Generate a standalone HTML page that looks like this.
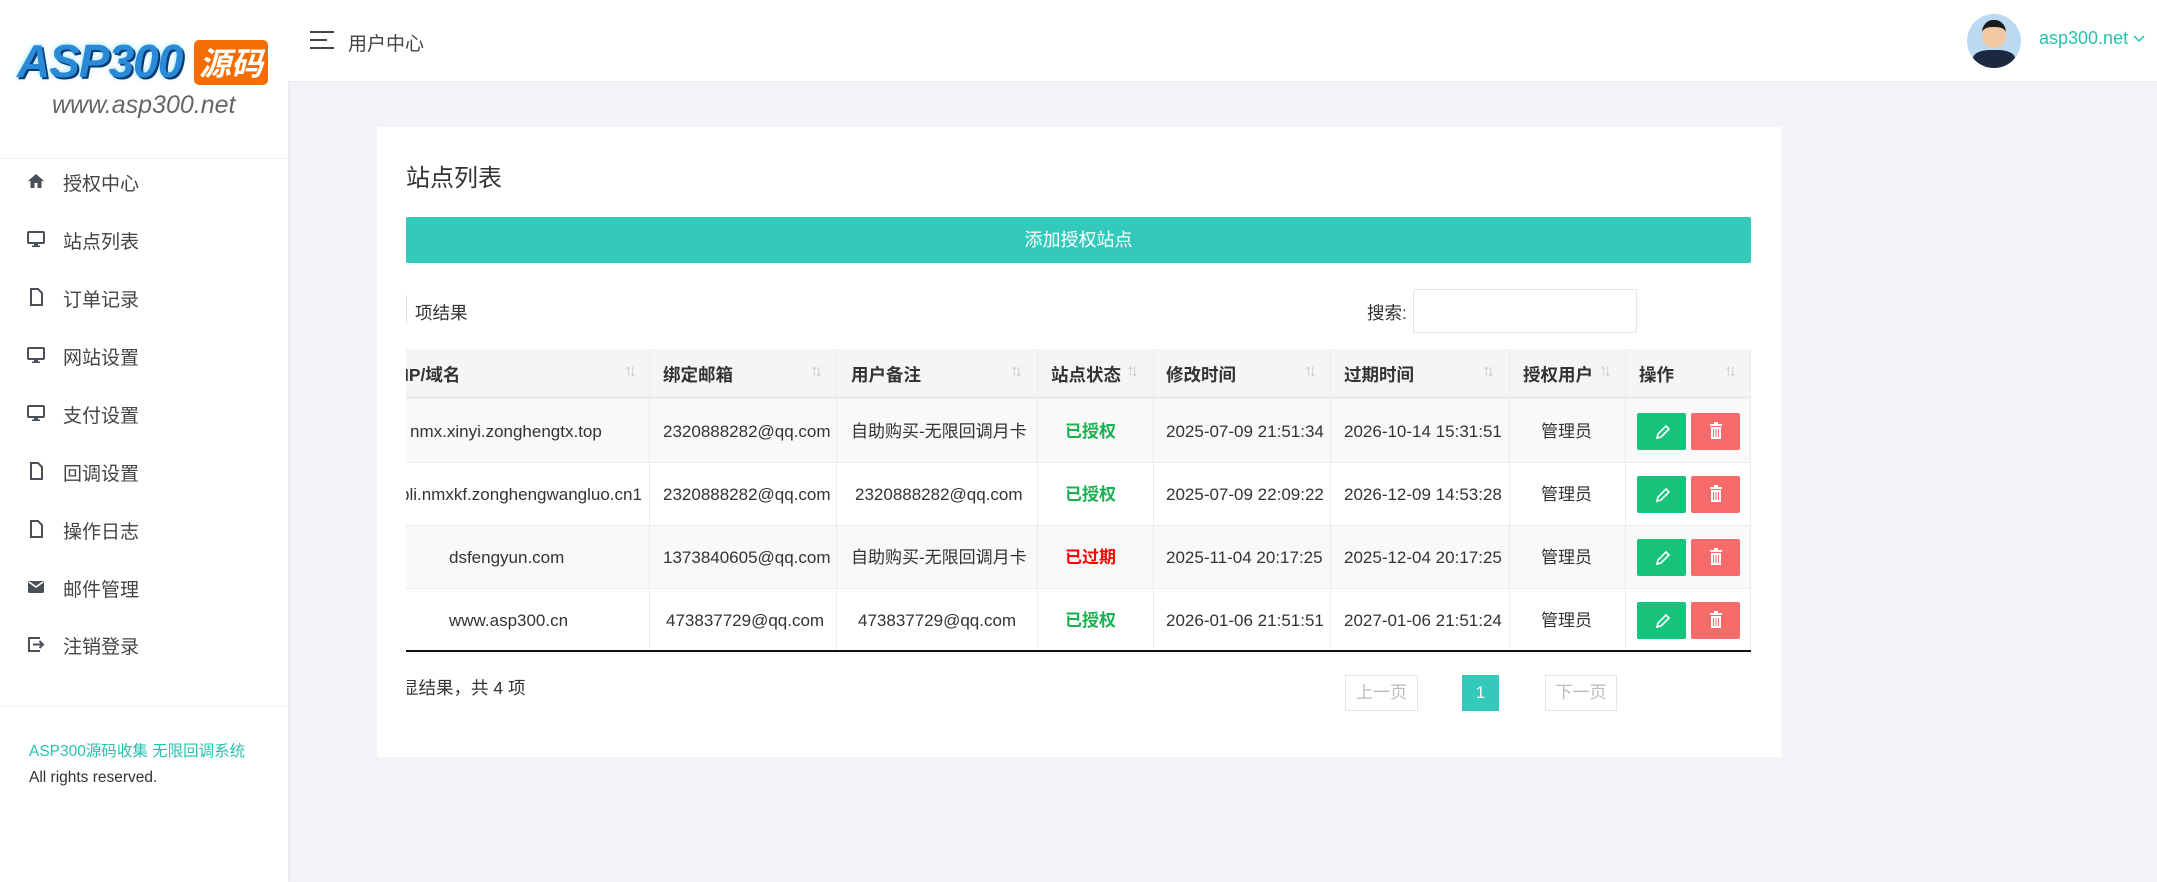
<!DOCTYPE html>
<html><head><meta charset="utf-8">
<style>
*{box-sizing:border-box;margin:0;padding:0}
html{width:2157px;height:882px;overflow:hidden}
body{width:2157px;height:882px;background:#f3f4f8;font-family:"Liberation Sans","Noto Sans CJK SC",sans-serif;color:#333;position:relative;overflow:hidden}
.abs{position:absolute}
#side{left:0;top:0;width:288px;height:882px;background:#fff;box-shadow:1px 0 4px rgba(0,0,0,.06)}
.mi{position:absolute;left:0;width:288px;height:30px;font-size:19px;color:#444;line-height:1.2}
.mi svg{position:absolute;left:26px;top:-1px}
.mi span{position:absolute;left:63px;top:2px}
#hdr{left:288px;top:0;width:1869px;height:82px;background:#fff;border-bottom:1px solid #eceef2}
#card{left:377px;top:127px;width:1404px;height:630px;background:#fff;overflow:hidden}
.th,.td{position:absolute;font-size:17px;white-space:nowrap;line-height:20px;height:20px}
.th{font-weight:bold;font-size:17.5px;color:#333}
.arr{position:absolute;color:#c8c8c8;font-size:17px;letter-spacing:-4px;line-height:20px}
.btn{position:absolute;width:49px;height:37px;border-radius:2px}
</style></head><body>
<div id="side" class="abs">
  <div class="abs" style="left:17px;top:34px;font:italic bold 46px 'Liberation Sans',sans-serif;color:#2a8ad8;letter-spacing:-1px;text-shadow:2px 2px 0 #0b3b73,0 0 6px #8fe4ff">ASP300</div>
  <div class="abs" style="left:194px;top:40px;width:74px;height:45px;background:#f56d00;border-radius:5px;color:#fff;font:bold italic 32px 'Noto Sans CJK SC',sans-serif;line-height:45px;text-align:center">源码</div>
  <div class="abs" style="left:52px;top:91px;font:italic 25px 'Liberation Sans',sans-serif;color:#666">www.asp300.net</div>
  <div class="abs" style="left:0;top:158px;width:288px;height:1px;background:#eef0f3"></div>

  <div class="mi" style="top:172px"><svg width="20" height="20" viewBox="0 0 20 20"><path d="M10 3 2 10h2.5v7h4v-5h3v5h4v-7H18z" fill="#4a4f58"/></svg><span>授权中心</span></div>
  <div class="mi" style="top:230px"><svg width="20" height="20" viewBox="0 0 20 20"><rect x="2" y="3" width="16" height="11" rx="1" fill="none" stroke="#4a4f58" stroke-width="2"/><rect x="8" y="14" width="4" height="3" fill="#4a4f58"/><rect x="6" y="16.5" width="8" height="1.5" fill="#4a4f58"/></svg><span>站点列表</span></div>
  <div class="mi" style="top:288px"><svg width="20" height="20" viewBox="0 0 20 20"><path d="M5 2h7l4 4v12H5z" fill="none" stroke="#4a4f58" stroke-width="2"/></svg><span>订单记录</span></div>
  <div class="mi" style="top:346px"><svg width="20" height="20" viewBox="0 0 20 20"><rect x="2" y="3" width="16" height="11" rx="1" fill="none" stroke="#4a4f58" stroke-width="2"/><rect x="8" y="14" width="4" height="3" fill="#4a4f58"/><rect x="6" y="16.5" width="8" height="1.5" fill="#4a4f58"/></svg><span>网站设置</span></div>
  <div class="mi" style="top:404px"><svg width="20" height="20" viewBox="0 0 20 20"><rect x="2" y="3" width="16" height="11" rx="1" fill="none" stroke="#4a4f58" stroke-width="2"/><rect x="8" y="14" width="4" height="3" fill="#4a4f58"/><rect x="6" y="16.5" width="8" height="1.5" fill="#4a4f58"/></svg><span>支付设置</span></div>
  <div class="mi" style="top:462px"><svg width="20" height="20" viewBox="0 0 20 20"><path d="M5 2h7l4 4v12H5z" fill="none" stroke="#4a4f58" stroke-width="2"/></svg><span>回调设置</span></div>
  <div class="mi" style="top:520px"><svg width="20" height="20" viewBox="0 0 20 20"><path d="M5 2h7l4 4v12H5z" fill="none" stroke="#4a4f58" stroke-width="2"/></svg><span>操作日志</span></div>
  <div class="mi" style="top:578px"><svg width="20" height="20" viewBox="0 0 20 20"><rect x="2" y="4" width="16" height="12" rx="1.5" fill="#4a4f58"/><path d="M3 5l7 5 7-5" fill="none" stroke="#fff" stroke-width="1.6"/></svg><span>邮件管理</span></div>
  <div class="mi" style="top:635px"><svg width="20" height="20" viewBox="0 0 20 20"><path d="M14 4H3v13h11" fill="none" stroke="#4a4f58" stroke-width="2"/><path d="M7 10.5h10M13.5 7l3.5 3.5-3.5 3.5" fill="none" stroke="#4a4f58" stroke-width="2"/></svg><span>注销登录</span></div>

  <div class="abs" style="left:0;top:706px;width:288px;height:1px;background:#eef0f3"></div>
  <div class="abs" style="left:29px;top:739px;font-size:15.5px;color:#26c2b0">ASP300源码收集 无限回调系统</div>
  <div class="abs" style="left:29px;top:769px;font-size:15.5px;color:#333">All rights reserved.</div>
</div>

<div id="hdr" class="abs">
  <div class="abs" style="left:22px;top:31px;width:24px;height:2px;background:#444"></div>
  <div class="abs" style="left:22px;top:39px;width:17px;height:2px;background:#444"></div>
  <div class="abs" style="left:22px;top:47px;width:24px;height:2px;background:#444"></div>
  <div class="abs" style="left:60px;top:29px;font-size:19px;color:#444">用户中心</div>
  <div class="abs" style="left:1679px;top:14px;width:54px;height:54px;border-radius:50%;background:#bcd9f2;overflow:hidden">
    <div class="abs" style="left:15px;top:6px;width:24px;height:28px;border-radius:45%;background:#f1c8a4;border-top:7px solid #1b1b1b"></div>
    <div class="abs" style="left:6px;top:36px;width:42px;height:20px;border-radius:40% 40% 0 0;background:#1c2840"></div>
  </div>
  <div class="abs" style="left:1751px;top:28px;font-size:18px;color:#26c2b0">asp300.net</div>
  <svg class="abs" style="left:1845px;top:35px" width="12" height="8" viewBox="0 0 12 8"><path d="M1 1l5 5 5-5" fill="none" stroke="#26c2b0" stroke-width="1.5"/></svg>
</div>

<div id="card" class="abs">
  <div class="abs" style="left:29px;top:31px;font-size:24px;color:#333">站点列表</div>
  <div class="abs" style="left:29px;top:90px;width:1345px;height:46px;background:#33c9bb;border-radius:2px;color:#fff;font-size:18px;text-align:center;line-height:46px">添加授权站点</div>
  <div class="abs" style="left:29px;top:168px;width:1px;height:28px;background:#ddd"></div>
  <div class="abs" style="left:38px;top:173px;font-size:17.5px">项结果</div>
  <div class="abs" style="left:990px;top:173px;font-size:17.5px">搜索:</div>
  <div class="abs" style="left:1036px;top:162px;width:224px;height:44px;border:1px solid #e3e5e8;border-radius:2px"></div>

  <div class="abs" style="left:29px;top:222px;width:1345px;height:303px;overflow:hidden">
    <div class="abs" style="left:0;top:0;width:1345px;height:50px;background:#f4f5f7;border-bottom:3px solid #ececec"></div>
    <div class="abs" style="left:0;top:50px;width:1345px;height:63px;background:#f9f9f9"></div>
    <div class="abs" style="left:0;top:176px;width:1345px;height:63px;background:#f9f9f9"></div>
    <div class="abs" style="left:0;top:113px;width:1345px;height:1px;background:#ececec"></div>
    <div class="abs" style="left:0;top:176px;width:1345px;height:1px;background:#ececec"></div>
    <div class="abs" style="left:0;top:239px;width:1345px;height:1px;background:#ececec"></div>
    <div class="abs" style="left:0;top:301px;width:1345px;height:2px;background:#111"></div>
    <div class="abs" style="left:243px;top:0;width:1px;height:301px;background:#ececec"></div>
    <div class="abs" style="left:430px;top:0;width:1px;height:301px;background:#ececec"></div>
    <div class="abs" style="left:631px;top:0;width:1px;height:301px;background:#ececec"></div>
    <div class="abs" style="left:747px;top:0;width:1px;height:301px;background:#ececec"></div>
    <div class="abs" style="left:924px;top:0;width:1px;height:301px;background:#ececec"></div>
    <div class="abs" style="left:1103px;top:0;width:1px;height:301px;background:#ececec"></div>
    <div class="abs" style="left:1219px;top:0;width:1px;height:301px;background:#ececec"></div>
    <div class="abs" style="left:1344px;top:0;width:1px;height:301px;background:#ececec"></div>

    <div class="th" style="left:-2px;top:16px">IP/域名</div><div class="arr" style="left:218px;top:12px">↑↓</div>
    <div class="th" style="left:257px;top:16px">绑定邮箱</div><div class="arr" style="left:404px;top:12px">↑↓</div>
    <div class="th" style="left:445px;top:16px">用户备注</div><div class="arr" style="left:604px;top:12px">↑↓</div>
    <div class="th" style="left:645px;top:16px">站点状态</div><div class="arr" style="left:720px;top:12px">↑↓</div>
    <div class="th" style="left:760px;top:16px">修改时间</div><div class="arr" style="left:898px;top:12px">↑↓</div>
    <div class="th" style="left:938px;top:16px">过期时间</div><div class="arr" style="left:1076px;top:12px">↑↓</div>
    <div class="th" style="left:1117px;top:16px">授权用户</div><div class="arr" style="left:1193px;top:12px">↑↓</div>
    <div class="th" style="left:1233px;top:16px">操作</div><div class="arr" style="left:1318px;top:12px">↑↓</div>

    <div class="td" style="left:4px;top:73px">nmx.xinyi.zonghengtx.top</div>
    <div class="td" style="left:-6px;top:136px">bli.nmxkf.zonghengwangluo.cn1</div>
    <div class="td" style="left:43px;top:199px">dsfengyun.com</div>
    <div class="td" style="left:43px;top:262px">www.asp300.cn</div>

    <div class="td" style="left:257px;top:73px">2320888282@qq.com</div>
    <div class="td" style="left:257px;top:136px">2320888282@qq.com</div>
    <div class="td" style="left:257px;top:199px">1373840605@qq.com</div>
    <div class="td" style="left:260px;top:262px">473837729@qq.com</div>

    <div class="td" style="left:445px;top:73px">自助购买-无限回调月卡</div>
    <div class="td" style="left:449px;top:136px">2320888282@qq.com</div>
    <div class="td" style="left:445px;top:199px">自助购买-无限回调月卡</div>
    <div class="td" style="left:452px;top:262px">473837729@qq.com</div>

    <div class="td" style="left:659px;top:73px;color:#17b24f;font-weight:bold">已授权</div>
    <div class="td" style="left:659px;top:136px;color:#17b24f;font-weight:bold">已授权</div>
    <div class="td" style="left:659px;top:199px;color:#f00;font-weight:bold">已过期</div>
    <div class="td" style="left:659px;top:262px;color:#17b24f;font-weight:bold">已授权</div>

    <div class="td" style="left:760px;top:73px">2025-07-09 21:51:34</div>
    <div class="td" style="left:760px;top:136px">2025-07-09 22:09:22</div>
    <div class="td" style="left:760px;top:199px">2025-11-04 20:17:25</div>
    <div class="td" style="left:760px;top:262px">2026-01-06 21:51:51</div>

    <div class="td" style="left:938px;top:73px">2026-10-14 15:31:51</div>
    <div class="td" style="left:938px;top:136px">2026-12-09 14:53:28</div>
    <div class="td" style="left:938px;top:199px">2025-12-04 20:17:25</div>
    <div class="td" style="left:938px;top:262px">2027-01-06 21:51:24</div>

    <div class="td" style="left:1135px;top:73px">管理员</div>
    <div class="td" style="left:1135px;top:136px">管理员</div>
    <div class="td" style="left:1135px;top:199px">管理员</div>
    <div class="td" style="left:1135px;top:262px">管理员</div>

    <div class="btn" style="left:1231px;top:64px;background:#17c37b"></div><div class="btn" style="left:1285px;top:64px;background:#f76b6b"></div>
    <div class="btn" style="left:1231px;top:127px;background:#17c37b"></div><div class="btn" style="left:1285px;top:127px;background:#f76b6b"></div>
    <div class="btn" style="left:1231px;top:190px;background:#17c37b"></div><div class="btn" style="left:1285px;top:190px;background:#f76b6b"></div>
    <div class="btn" style="left:1231px;top:253px;background:#17c37b"></div><div class="btn" style="left:1285px;top:253px;background:#f76b6b"></div>
    <svg class="abs" style="left:1248px;top:73px" width="16" height="210" viewBox="0 0 16 210">
      <g fill="none" stroke="#fff" stroke-width="1.6">
        <path d="M3 16l1-4 8-8 3 3-8 8z"/><path transform="translate(0,63)" d="M3 16l1-4 8-8 3 3-8 8z"/><path transform="translate(0,126)" d="M3 16l1-4 8-8 3 3-8 8z"/><path transform="translate(0,189)" d="M3 16l1-4 8-8 3 3-8 8z"/>
      </g></svg>
    <svg class="abs" style="left:1303px;top:72px" width="14" height="210" viewBox="0 0 14 210">
      <g fill="#fff"><g id="t"><rect x="1" y="3" width="12" height="2"/><rect x="5" y="1" width="4" height="2"/><path d="M2 6h10v12H2z M4 8v8h1V8z M6.5 8v8h1V8z M9 8v8h1V8z" fill-rule="evenodd"/></g>
      <use href="#t" y="63"/><use href="#t" y="126"/><use href="#t" y="189"/></g></svg>
  </div>

  <div class="abs" style="left:30px;top:548px;width:200px;overflow:hidden;font-size:17.5px;white-space:nowrap"><span style="margin-left:-6px">显结果，共 4 项</span></div>
  <div class="abs" style="left:968px;top:548px;width:73px;height:36px;border:1px solid #e6e6e6;color:#bbb;font-size:17px;text-align:center;line-height:34px">上一页</div>
  <div class="abs" style="left:1085px;top:548px;width:37px;height:36px;background:#33c9bb;color:#fff;font-size:17px;text-align:center;line-height:36px">1</div>
  <div class="abs" style="left:1168px;top:548px;width:72px;height:36px;border:1px solid #e6e6e6;color:#bbb;font-size:17px;text-align:center;line-height:34px">下一页</div>
</div>
</body></html>
